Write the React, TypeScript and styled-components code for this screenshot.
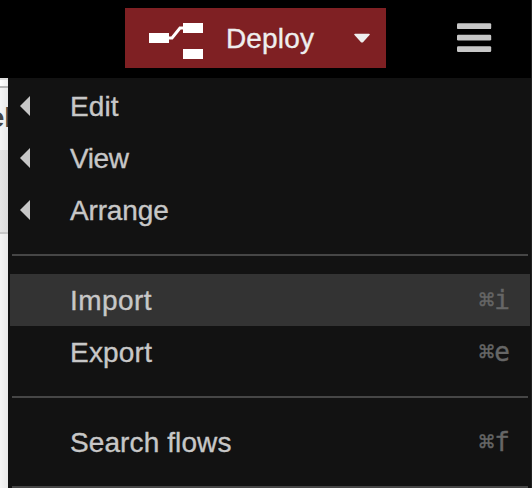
import React from "react";
import styled, { createGlobalStyle } from "styled-components";

const GlobalStyle = createGlobalStyle`
  * { box-sizing: border-box; }
  body { margin: 0; background: #000; }
`;

const Page = styled.div`
  width: 532px;
  height: 488px;
  overflow: hidden;
  display: flex;
  flex-direction: column;
  background: #000;
  border-right: 1px solid #222;
  font-family: "Liberation Sans", Arial, sans-serif;
  font-size: 28px;
`;

const Header = styled.header`
  flex: none;
  height: 78px;
  padding: 8px 39px 0 125px;
  display: flex;
  justify-content: space-between;
  align-items: flex-start;
  background: #000;
`;

const DeployButton = styled.button`
  width: 261px;
  height: 60px;
  padding: 0 16px 0 24px;
  border: 0;
  display: flex;
  align-items: center;
  background: #7f2023;
  color: #eee;
  font: inherit;
`;

const DeployIcon = styled.svg`
  flex: none;
  margin-top: 6px;
`;

const DeployLabel = styled.span`
  margin: 0 auto 0 23px;
  padding-top: 2px;
  line-height: 58px;
  letter-spacing: 0.15px;
  -webkit-text-stroke: 0.35px currentColor;
`;

const MenuButton = styled.button`
  width: 35px;
  height: 60px;
  padding: 0;
  border: 0;
  background: none;
  display: flex;
  align-items: center;
`;

const Body = styled.div`
  flex: 1;
  display: flex;
  min-height: 0;
`;

const Workspace = styled.div`
  width: 8px;
  overflow: hidden;
  display: flex;
  flex-direction: column;
  background: linear-gradient(to right, #f5f5f5, #e9e9e9);
`;

const TabEdge = styled.div`
  flex: none;
  height: 10px;
  border-top: 2px solid #ddd;
  border-bottom: 2px solid #b5b5b5;
  background: linear-gradient(to right, #fff, #eee);
`;

const TabTitle = styled.div`
  flex: none;
  height: 62px;
  margin-right: -4px;
  display: flex;
  justify-content: flex-end;
  color: #444;
  font-weight: bold;
  line-height: 60px;
  white-space: nowrap;
`;

const TabToolbar = styled.div`
  flex: none;
  height: 84px;
  border-bottom: 2px solid #c8c8c8;
  background: linear-gradient(to right, #e6e6e6, #dcdcdc);
`;

const Menu = styled.ul`
  width: 523px;
  margin: 0;
  padding: 2px 0 0;
  list-style: none;
  background: #121212;
`;

const Item = styled.li<{ $active?: boolean }>`
  height: 52px;
  margin: 0 1px 0 2px;
  padding: 0 20px 0 10px;
  display: flex;
  align-items: center;
  background: ${(p) => (p.$active ? "#333" : "transparent")};
  color: #c7c7c7;
`;

const ArrowSlot = styled.span`
  width: 50px;
  display: flex;
`;

const Label = styled.span<{ $spacing: number }>`
  flex: 1;
  padding-top: 2px;
  line-height: 50px;
  letter-spacing: ${(p) => p.$spacing}px;
  -webkit-text-stroke: 0.35px currentColor;
`;

const Shortcut = styled.span`
  font-family: "DejaVu Sans Mono", monospace;
  font-size: 26px;
  line-height: 50px;
  color: #666;
  -webkit-text-stroke: 0.4px currentColor;
`;

const Divider = styled.li`
  height: 2px;
  margin: 18px 3px 18px 4px;
  background: #464646;
`;

type Entry = { label: string; spacing: number; submenu?: boolean; keys?: string; active?: boolean };

const groups: Entry[][] = [
  [
    { label: "Edit", spacing: 0.1, submenu: true },
    { label: "View", spacing: -0.4, submenu: true },
    { label: "Arrange", spacing: -0.15, submenu: true },
  ],
  [
    { label: "Import", spacing: 0.45, keys: "⌘i", active: true },
    { label: "Export", spacing: 0.2, keys: "⌘e" },
  ],
  [{ label: "Search flows", spacing: 0.1, keys: "⌘f" }],
];

export default function App() {
  return (
    <Page>
      <GlobalStyle />
      <Header>
        <DeployButton>
          <DeployIcon width="54" height="36" viewBox="0 0 54 36">
            <path d="M20 15H23L31 5H34" fill="none" stroke="#fff" strokeWidth="3" />
            <path d="M0 10h20v10H0zM34 0h20v10H34zM34 26h20v10H34z" fill="#fff" />
          </DeployIcon>
          <DeployLabel>Deploy</DeployLabel>
          <svg width="16" height="10" viewBox="0 0 16 10">
            <path d="M1 .7H15Q16.500 .7 15.500 2L9 9.200Q8 10 7 9.200L.5 2Q-.5 .7 1 .7Z" fill="#eee" />
          </svg>
        </DeployButton>
        <MenuButton aria-label="Menu">
          <svg width="35" height="30" viewBox="0 0 35 30" fill="#c7c7c7">
            <rect x="0" y=".3" width="34.200" height="5.800" rx="1.200" />
            <rect x="0" y="11.700" width="34.200" height="5.800" rx="1.200" />
            <rect x="0" y="23.200" width="34.200" height="5.800" rx="1.200" />
          </svg>
        </MenuButton>
      </Header>
      <Body>
        <Workspace>
          <TabEdge />
          <TabTitle>el</TabTitle>
          <TabToolbar />
        </Workspace>
        <Menu>
          {groups.map((group, g) => (
            <React.Fragment key={g}>
              {group.map((item) => (
                <Item key={item.label} $active={item.active}>
                  <ArrowSlot>
                    {item.submenu && (
                      <svg width="10" height="20" viewBox="0 0 10 20">
                        <path d="M10 0V20L0 10Z" fill="#c7c7c7" />
                      </svg>
                    )}
                  </ArrowSlot>
                  <Label $spacing={item.spacing}>{item.label}</Label>
                  {item.keys && <Shortcut>{item.keys}</Shortcut>}
                </Item>
              ))}
              <Divider />
            </React.Fragment>
          ))}
        </Menu>
      </Body>
    </Page>
  );
}
